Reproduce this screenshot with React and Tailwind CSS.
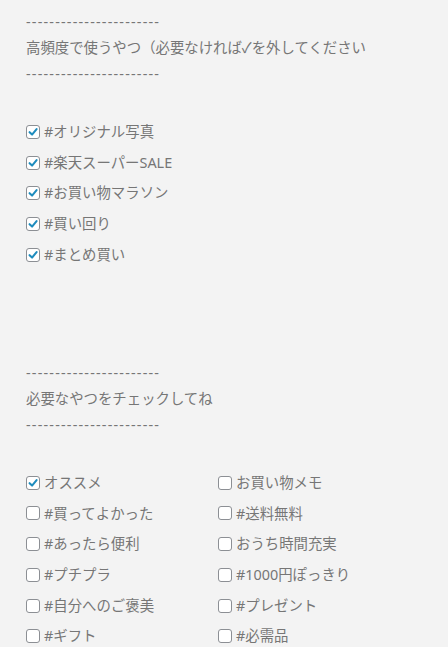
import React from "react";

const font = { fontFamily: '"Noto Sans", "Noto Sans CJK JP", sans-serif' };

function Box({ checked }) {
  return (
    <span className="flex h-[14px] w-[14px] shrink-0 items-center justify-center rounded-[3px] border border-[#8c8f94] bg-white">
      {checked && (
        <svg viewBox="0 0 14 14" className="h-[14px] w-[14px]">
          <path d="M3 7.2 L5.9 10 L11.2 3.6" fill="none" stroke="#1e8cbe" strokeWidth="2.4" strokeLinecap="round" strokeLinejoin="round" />
        </svg>
      )}
    </span>
  );
}

function Item({ label, checked }) {
  return (
    <div className="flex h-[30.7px] items-center gap-[4px]">
      <Box checked={checked} />
      <span className="whitespace-nowrap">{label}</span>
    </div>
  );
}

const dashes = "-----------------------";

function Header({ text }) {
  return (
    <div className="leading-[26px]">
      <div className="tracking-[1.2px]">{dashes}</div>
      <div>{text}</div>
      <div className="tracking-[1.2px]">{dashes}</div>
    </div>
  );
}

export default function App() {
  const top = ["#オリジナル写真", "#楽天スーパーSALE", "#お買い物マラソン", "#買い回り", "#まとめ買い"];
  const left = [
    ["オススメ", true],
    ["#買ってよかった", false],
    ["#あったら便利", false],
    ["#プチプラ", false],
    ["#自分へのご褒美", false],
    ["#ギフト", false],
  ];
  const right = [
    ["お買い物メモ", false],
    ["#送料無料", false],
    ["おうち時間充実", false],
    ["#1000円ぽっきり", false],
    ["#プレゼント", false],
    ["#必需品", false],
  ];
  return (
    <div className="min-h-[647px] w-[448px] overflow-hidden bg-[#f3f3f3] pl-[26px] pt-[9px] text-[14.4px] text-[#767676]" style={font}>
      <Header text="高頻度で使うやつ（必要なければ✓を外してください" />
      <div className="mt-[29.5px]">
        {top.map((t) => (
          <Item key={t} label={t} checked />
        ))}
      </div>
      <div className="mt-[90px]">
        <Header text="必要なやつをチェックしてね" />
      </div>
      <div className="mt-[29.5px] grid grid-cols-[192px_192px]">
        {left.map((l, i) => (
          <React.Fragment key={i}>
            <Item label={l[0]} checked={l[1]} />
            <Item label={right[i][0]} checked={right[i][1]} />
          </React.Fragment>
        ))}
      </div>
    </div>
  );
}
